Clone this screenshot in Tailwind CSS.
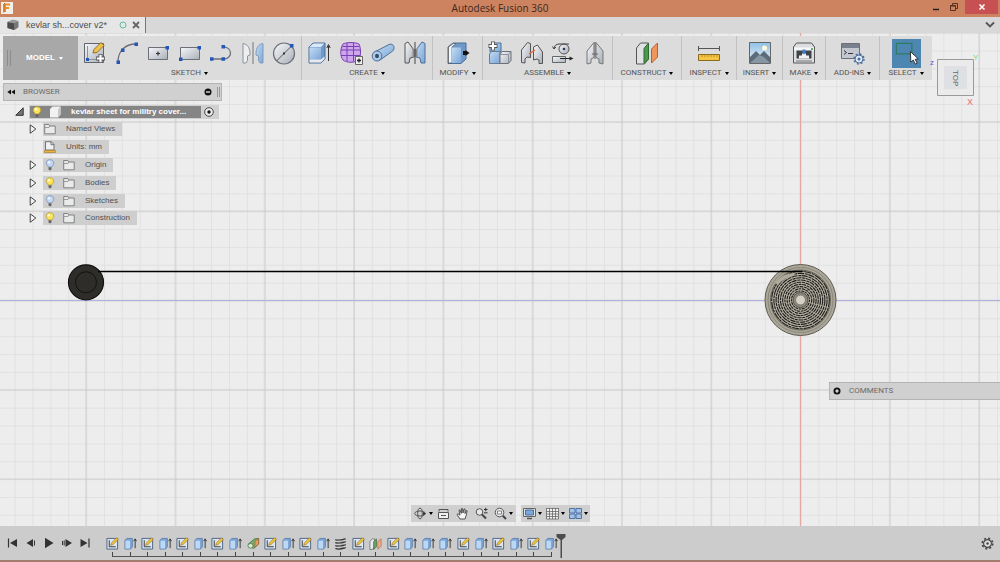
<!DOCTYPE html>
<html lang="en">

<head>
    <meta charset="UTF-8">
    <meta name="viewport" content="width=device-width, initial-scale=1.0">
    <title>Autodesk Fusion 360</title>
    <script src="https://cdn.jsdelivr.net/npm/@tailwindcss/browser@4"></script>
</head>

<body class="bg-[#ededed] font-['Liberation_Sans',Arial,sans-serif] text-[8px] leading-[10px] text-[#555]">
    <!-- icon set -->
    <svg width="0" height="0" class="absolute" aria-hidden="true">
        <defs>
            <linearGradient id="blue" x1="0" y1="0" x2="1" y2="1">
                <stop offset="0" stop-color="#c4dcf4" />
                <stop offset="1" stop-color="#7ba6d6" />
            </linearGradient>
            <linearGradient id="steel" x1="0" y1="0" x2="1" y2="1">
                <stop offset="0" stop-color="#f6f7f9" />
                <stop offset="1" stop-color="#a9afb9" />
            </linearGradient>
            <linearGradient id="sky" x1="0" y1="0" x2="0" y2="1">
                <stop offset="0" stop-color="#8fc0e8" />
                <stop offset="1" stop-color="#f2f6f0" />
            </linearGradient>
        </defs>

        <symbol id="i-sketch" viewBox="0 0 24 24">
            <path d="M1.500 2.500h19v19h-19z" fill="url(#steel)" stroke="#5d6570" />
            <path d="M4.500 5v13.500h13" fill="none" stroke="#8b929c" />
            <path d="M3 17h3v3H3z" fill="#2456b8" />
            <path d="M10 12l1-3.500 7-7 3 3-7 7z" fill="#f2c14a" stroke="#7d5a17" stroke-width=".8" />
            <path d="M17.500 13v9M13 17.500h9" stroke="#555" stroke-width="4" />
            <path d="M17.500 13.800v7.400M13.800 17.500h7.400" stroke="#fff" stroke-width="2.200" />
        </symbol>
        <symbol id="i-arc" viewBox="0 0 24 24">
            <path d="M3 21C3 10 10 3 21 3" fill="none" stroke="#6a6f78" stroke-width="1.300" />
            <path d="M1.500 19.500h3.500v3.500H1.500zM6 7.500h3.500v3.500H6zM19.500 1.500H23V5h-3.500z" fill="#2456b8" />
        </symbol>
        <symbol id="i-rect-center" viewBox="0 0 24 24">
            <path d="M2.500 6.500h19v12h-19z" fill="url(#steel)" stroke="#6a6f78" />
            <path d="M12 10.500v4M10 12.500h4" stroke="#333" stroke-width="1.200" />
            <path d="M19.500 5H23v3.500h-3.500z" fill="#2456b8" />
        </symbol>
        <symbol id="i-rect" viewBox="0 0 24 24">
            <path d="M2.500 6.500h19v12h-19z" fill="url(#steel)" stroke="#6a6f78" />
            <path d="M19.500 5H23v3.500h-3.500zM1 16.500h3.500V20H1z" fill="#2456b8" />
        </symbol>
        <symbol id="i-slot" viewBox="0 0 24 24">
            <path d="M3 18h12c3.500 0 6.500-2.500 6.500-6S18.500 6 14 6" fill="none" stroke="#6a6f78" stroke-width="1.300" />
            <path d="M1 16.300h3.500v3.500H1zM12.500 16.300H16v3.500h-3.500zM12.500 4H16v3.500h-3.500z" fill="#2456b8" />
        </symbol>
        <symbol id="i-mirror" viewBox="0 0 24 24">
            <path d="M2 2.500c4 .500 7 4 7 10v1.500l-2.500 1v4.500L5 22H2z" fill="#eceef0" stroke="#8b929c" />
            <path d="M22 2.500c-4 .500-7 4-7 10v1.500l2.500 1v4.500L19 22h3z" fill="url(#blue)" stroke="#7f9cc0" />
            <path d="M12 1v22" stroke="#777" />
        </symbol>
        <symbol id="i-circle" viewBox="0 0 24 24">
            <circle cx="12" cy="12.500" r="10.500" fill="url(#steel)" stroke="#6a6f78" stroke-width="1.200" />
            <path d="M4.500 20L19.500 5" stroke="#555" />
            <path d="M18 3h3.500v3.500H18z" fill="#2456b8" />
            <path d="M11 11.500h2v2h-2z" fill="#333" />
        </symbol>
        <symbol id="i-extrude" viewBox="0 0 24 24">
            <path d="M2 6l4-4h12v16l-4 4H2z" fill="#6f99c9" stroke="#4d6f99" />
            <path d="M2.500 6.500h11.500v12H2.500z" fill="url(#blue)" />
            <path d="M2.500 6l3.800-3.500h11L14 6z" fill="#d8e8f8" />
            <path d="M2.500 18.500H14l3.500-3v2.500L14 21.500H2.500z" fill="#e8eaee" />
            <path d="M21.500 20V5M19.800 7l1.700-3.500L23.200 7" fill="none" stroke="#333" stroke-width="1" />
        </symbol>
        <symbol id="i-form" viewBox="0 0 24 24">
            <path d="M4 3c4-2 12-2 16 0 2 4 2 12 0 16-4 3-12 3-16 0C1 15 1 8 4 3z" fill="#cda6ee" stroke="#7a3fb0" />
            <path d="M2 9h19.500M2 14.500h19.500M8 2v18.500M14.500 2v18.500M3.500 5.500h17" fill="none" stroke="#7a3fb0" />
            <path d="M16.500 15.500h7v8h-7z" fill="#eee" stroke="#666" />
            <path d="M20 17.500v4M18 19.500h4" stroke="#222" stroke-width="1.300" />
        </symbol>
        <symbol id="i-pipe" viewBox="0 0 24 24">
            <path d="M3.500 11L18 3.500c3-1 5 .5 5 3s-1 3.500-2 4L8.500 19.500z" fill="url(#blue)" stroke="#4d6f99" />
            <ellipse cx="6" cy="15" rx="4.800" ry="5" fill="#a9c8ea" stroke="#4d6f99" />
            <ellipse cx="6" cy="15" rx="2.500" ry="2.800" fill="#33506f" stroke="#e4effa" stroke-width=".7" />
        </symbol>
        <symbol id="i-mirror3d" viewBox="0 0 24 24">
            <path d="M2 2.500L5 1l6 8v7l-4 1-1 5H2z" fill="url(#steel)" stroke="#555" />
            <path d="M22 2.500L19 1l-6 8v7l4 1 1 5h4z" fill="url(#blue)" stroke="#4d6f99" />
            <path d="M9.500 8h5v8h-5z" fill="#888" />
            <path d="M12 1v22" stroke="#444" />
        </symbol>
        <symbol id="i-press" viewBox="0 0 24 24">
            <path d="M2 6l5-4h13v16l-5 4.500H2z" fill="#6f99c9" stroke="#4d6f99" />
            <path d="M2.500 6l4.800-3.500h2.700L6 6v16H2.500z" fill="#f4f5f7" stroke="#555" stroke-width=".7" />
            <path d="M6 6.500h9V22H6z" fill="url(#blue)" />
            <path d="M17 12h3" stroke="#111" stroke-width="4" />
            <path d="M19.500 9l4 3-4 3z" fill="#111" />
        </symbol>
        <symbol id="i-component" viewBox="0 0 24 24">
            <path d="M2 4l2-2h9v9H2z" fill="url(#blue)" stroke="#4d6f99" />
            <path d="M1.500 13l2-2.500H12V22.500H1.500z" fill="url(#blue)" stroke="#6a7c92" />
            <path d="M12 13.500l2-3h9v9l-2.500 3H12z" fill="url(#steel)" stroke="#6a6f78" />
            <path d="M12 13.500h8.500v9M20.500 13.500l2.500-3" fill="none" stroke="#8b929c" />
            <path d="M5 .5v9M.5 5h9" stroke="#555" stroke-width="4" />
            <path d="M5 1.300v7.400M1.300 5h7.400" stroke="#fff" stroke-width="2.200" />
        </symbol>
        <symbol id="i-joint" viewBox="0 0 24 24">
            <path d="M1.500 9l6-7.500 3 1v14l-3.500-.5-2 2v4l-3.500-.5z" fill="url(#steel)" stroke="#555" />
            <path d="M22.500 11l-5-7-4 2v13l3.500-1 2 1v3.500h3.500z" fill="url(#steel)" stroke="#555" />
            <path d="M9 13l6-4" stroke="#e0683c" stroke-width="1.500" />
        </symbol>
        <symbol id="i-asbuilt" viewBox="0 0 24 24">
            <circle cx="13" cy="8" r="5" fill="url(#steel)" stroke="#555" />
            <circle cx="13" cy="8" r="1.300" fill="#2d3e58" />
            <path d="M3 8c0-3 2-5 5-5M3 8L1.500 5.500M3 8l2-2M8 3h10" fill="none" stroke="#444" />
            <path d="M1.500 15.500h13v6h-13z" fill="url(#steel)" stroke="#666" />
            <path d="M9 17.500h11" stroke="#222" />
            <path d="M18.500 15.500l4 2-4 2z" fill="#222" />
        </symbol>
        <symbol id="i-origin" viewBox="0 0 24 24">
            <path d="M4 10l7-8.500v15L8 18v4l-4 1zM20 10l-7-8.500v15l3 1.500v4l4 1z" fill="url(#steel)" stroke="#777" />
            <path d="M12 1v17M9 13h6" stroke="#666" />
        </symbol>
        <symbol id="i-plane" viewBox="0 0 24 24">
            <path d="M1.500 7l4-5h8v16l-4 5h-8z" fill="#dfe1e4" stroke="#555" />
            <path d="M9 7.500l4.500-5.500v16L9 22.500z" fill="#4a9a4c" stroke="#2e6a30" />
            <path d="M16.500 8l6-6v14l-6 6z" fill="#f0955c" stroke="#b8602e" />
        </symbol>
        <symbol id="i-measure" viewBox="0 0 24 24">
            <path d="M1.500 5v5M22.500 5v5M2 7.500h20" stroke="#555" />
            <path d="M1.500 13.500h21v6h-21z" fill="#f5c444" stroke="#8a6a1c" />
            <path d="M5 13.500v2.500M8 13.500v2.500M11 13.500v2.500M14 13.500v2.500M17 13.500v2.500M20 13.500v2.500" stroke="#a8832c" stroke-width=".8" />
        </symbol>
        <symbol id="i-image" viewBox="0 0 24 24">
            <path d="M1.500 1.500h21v21h-21z" fill="url(#sky)" stroke="#666" />
            <circle cx="16.500" cy="7" r="2.500" fill="#fffbd8" />
            <path d="M2 16l6-6 4 4 4-4 6 6v6H2z" fill="#5c6b7a" />
            <path d="M2 22l9-8 5 2 6 6z" fill="#8796a3" />
        </symbol>
        <symbol id="i-print" viewBox="0 0 24 24">
            <path d="M1.500 6l3-4h15l3 4v16h-21z" fill="#dcdde0" stroke="#555" />
            <path d="M2 6.500h20v3H2z" fill="#f7f7f7" />
            <path d="M4.500 9.500h15v8h-15z" fill="#3f434a" />
            <path d="M7 17.500v-3h3v-2h4v2h3v3z" fill="#f2f2f2" />
            <path d="M10.500 8.500h3v3l-1.500 2-1.500-2z" fill="#3f82d0" />
            <path d="M4 20h16" stroke="#777" />
            <path d="M19 8h2" stroke="#3a9a3c" stroke-width="1.500" />
        </symbol>
        <symbol id="i-script" viewBox="0 0 24 24">
            <path d="M.5 2.500h18v15H.5z" fill="#c3c7cf" stroke="#6a6f78" />
            <path d="M1 3h17v4H1z" fill="#78808e" />
            <path d="M3 9.500l2.500 2L3 13.500M7 12.500h5" fill="none" stroke="#333" />
            <circle cx="18" cy="18" r="4" fill="#dfe9f5" stroke="#4b6d9b" />
            <circle cx="18" cy="18" r="5" fill="none" stroke="#4b6d9b" stroke-width="1.400" stroke-dasharray="1.960 1.967" />
            <circle cx="18" cy="18" r="1.500" fill="#4b6d9b" />
        </symbol>
        <symbol id="i-select" viewBox="0 0 30 30">
            <path d="M4.500 4.500h16v11h-16z" fill="none" stroke="#2e7b63" stroke-width="1.300" />
            <path d="M19 13l.5 11 2.500-2.200 2 4.200 2-1-2-4 3.200-.5z" fill="#fff" stroke="#222" stroke-width=".9" />
        </symbol>

        <symbol id="i-bulb-on" viewBox="0 0 10 12">
            <path d="M5 .7c2.500 0 3.800 1.700 3.800 3.500S7.200 6.500 6.700 8H3.300C2.800 6.500 1.200 6 1.200 4.200S2.500.7 5 .7z" fill="#fbe258" stroke="#b39a2e" stroke-width=".7" />
            <path d="M3.500 8.300h3v2.200L5 11.500l-1.500-1z" fill="#666" />
            <circle cx="4" cy="3.300" r="1.300" fill="#fffbd0" />
        </symbol>
        <symbol id="i-bulb-off" viewBox="0 0 10 12">
            <path d="M5 .7c2.500 0 3.800 1.700 3.800 3.500S7.200 6.500 6.700 8H3.300C2.800 6.500 1.200 6 1.200 4.200S2.500.7 5 .7z" fill="#c3d7f2" stroke="#6f8cb8" stroke-width=".7" />
            <path d="M3.500 8.300h3v2.200L5 11.500l-1.500-1z" fill="#666" />
            <circle cx="4" cy="3.300" r="1.300" fill="#eef5ff" />
        </symbol>
        <symbol id="i-folder" viewBox="0 0 12 12">
            <path d="M.7 10.800V1.500h4l1 1.500h5.500v7.800z" fill="#e9eaea" stroke="#777" stroke-width=".9" />
            <path d="M1 4.500h4L6 3" fill="none" stroke="#888" stroke-width=".8" />
        </symbol>
        <symbol id="i-units" viewBox="0 0 12 12">
            <path d="M1.500 9V.7h5.800L10 3.500V9z" fill="#eef0f2" stroke="#666" stroke-width=".9" />
            <path d="M7 .7v3h3" fill="none" stroke="#666" stroke-width=".9" />
            <path d="M.5 9.500h11v2H.5z" fill="#efb23c" stroke="#a87519" stroke-width=".6" />
        </symbol>
        <symbol id="i-arrow" viewBox="0 0 8 10">
            <path d="M1.200.8L6.800 5 1.200 9.300z" fill="#f2f2f2" stroke="#444" />
        </symbol>
        <symbol id="i-cube" viewBox="0 0 12 12">
            <path d="M1 3l2.500-2.500h8v8L9 11.500H1z" fill="#f2f2f2" />
            <path d="M9 3.500l2.500-3v8L9 11.500z" fill="#c8c8c8" />
        </symbol>

        <!-- timeline -->
        <symbol id="t-sketch" viewBox="0 0 14 14">
            <path d="M1 1.500h11.500V13H1z" fill="#dbe6f3" stroke="#4a5f80" />
            <path d="M3.500 3.500v7h7" fill="none" stroke="#333" />
            <path d="M5 9l.8-2.500L11.300.8l1.900 1.900L7.500 8.200z" fill="#f3c63a" stroke="#8a6413" stroke-width=".6" />
        </symbol>
        <symbol id="t-extrude" viewBox="0 0 14 14">
            <path d="M1 3.500l2-2h6v9l-2 2.500H1z" fill="#7da6d8" stroke="#4e74a5" stroke-width=".8" />
            <path d="M1.500 4h5v8.500h-5z" fill="#bcd8f5" />
            <path d="M12 12V2.500M10.500 4.500L12 2l1.500 2.500" fill="none" stroke="#333" />
        </symbol>
        <symbol id="t-loft" viewBox="0 0 14 14">
            <path d="M1 8l7-6 4.500-.5v6L7 12.500z" fill="#74b06c" stroke="#3f6e3a" stroke-width=".8" />
            <path d="M8.500 4.500l4-3v6l-4 3.500z" fill="#e89a64" stroke="#9c5a2c" stroke-width=".7" />
            <ellipse cx="3.800" cy="9.500" rx="2.800" ry="2.500" fill="#d9ecd2" stroke="#3f6e3a" stroke-width=".8" />
        </symbol>
        <symbol id="t-coil" viewBox="0 0 14 14">
            <path d="M2 3c3 1 7 0 10-1M2 6.200c3 1 7 0 10-1M2 9.400c3 1 7 0 10-1M2 12.600c3 1 7 0 10-1" fill="none" stroke="#333" stroke-width="1.500" stroke-linecap="round" />
            <path d="M2 3l10 2.200M2 6.200l10 2.200M2 9.400l10 2.200" fill="none" stroke="#888" stroke-width=".7" />
        </symbol>
        <symbol id="t-plane" viewBox="0 0 14 14">
            <path d="M1 5l2.500-3H6v8.500l-2.500 3H1z" fill="#e9ebee" stroke="#666" stroke-width=".8" />
            <path d="M5 5l3-3v8.500l-3 3z" fill="#6aa568" stroke="#3f6e3a" stroke-width=".8" />
            <path d="M9.500 5l3.500-3v8l-3.500 3z" fill="#f0a888" stroke="#b8704e" stroke-width=".8" />
        </symbol>
    </svg>

    <div class="flex min-h-screen flex-col">
        <!-- title bar -->
        <header class="relative flex h-[17px] items-start justify-between bg-[#cd8360]">
            <svg class="ml-px mt-[2px] size-3" viewBox="0 0 12 12">
                <path d="M0 0h12v12H0z" fill="#f3efe8" />
                <path d="M4 10V2.500h5M4 6h4" fill="none" stroke="#e8902c" stroke-width="2" />
                <path d="M2.800 10.500V2l1.200-.8" fill="none" stroke="#8c4a12" stroke-width=".8" />
            </svg>
            <h1 class="absolute inset-x-0 text-center font-['Open_Sans',sans-serif] text-[10px] leading-[17px] text-[#3a2a22]">Autodesk Fusion 360</h1>
            <div class="relative mr-[2px] flex">
                <button aria-label="Minimize" class="flex h-[14px] w-[18px] items-center justify-center">
                    <svg class="size-[10px]" viewBox="0 0 10 10"><path d="M2 7.500h6" stroke="#222" stroke-width="1.500" /></svg>
                </button>
                <button aria-label="Restore" class="mr-[2px] flex h-[14px] w-[18px] items-center justify-center">
                    <svg class="size-[10px]" viewBox="0 0 10 10"><path d="M1.500 3.500h5v5h-5zM3.500 3V1.500h5v5H7M1.500 4h5" fill="none" stroke="#4a2a1c" stroke-width=".9" /></svg>
                </button>
                <button aria-label="Close" class="flex h-[14px] w-[33px] items-center justify-center bg-[#c75052]">
                    <svg class="size-[8px]" viewBox="0 0 8 8"><path d="M1.500 1.500l5 5M6.500 1.500l-5 5" stroke="#fff" stroke-width="1.600" /></svg>
                </button>
            </div>
        </header>

        <!-- document tabs -->
        <nav class="flex h-4 items-center justify-between bg-[#d8d8d8]">
            <div class="flex h-full items-center border-r border-[#777] bg-[#e6e6e6] pl-[7px] pr-[5px]">
                <svg class="size-3" viewBox="0 0 12 12">
                    <path d="M.5 3L6 .7l5.500 1.500v6L7.500 11 .5 9z" fill="#777" />
                    <path d="M.5 3L7 4.200V11L.5 9z" fill="#4c4c4c" />
                    <path d="M.5 3L6 .7l5.500 1.500L7 4.200z" fill="#999" />
                </svg>
                <a href="#" class="ml-[7px] text-[9px] leading-4 text-[#4c4c4c]">kevlar sh...cover v2*</a>
                <svg class="ml-3 size-[8px]" viewBox="0 0 8 8"><circle cx="4" cy="4" r="3" fill="none" stroke="#62bda5" /></svg>
                <button aria-label="Close tab" class="ml-[5px]">
                    <svg class="size-[8px]" viewBox="0 0 8 8"><path d="M1 1l6 6M7 1L1 7" stroke="#666" stroke-width="1.900" /></svg>
                </button>
            </div>
            <button aria-label="Show tabs" class="mr-[5px]">
                <svg class="h-[8px] w-[10px]" viewBox="0 0 10 8"><path d="M1 1.500l4 4 4-4" fill="none" stroke="#555" stroke-width="1.800" /></svg>
            </button>
        </nav>

        <main class="relative flex-1 overflow-hidden pl-[3px] pt-[3px]">
            <!-- model canvas -->
            <svg class="absolute inset-0 h-full w-full" viewBox="0 33 1000 493" preserveAspectRatio="xMidYMid slice">
                <defs>
                    <pattern id="minor" x="800.500" y="300.500" width="17.860" height="17.860" patternUnits="userSpaceOnUse">
                        <path d="M0 0h17.860M0 0v17.860" stroke="#d6d6d6" stroke-width="1" />
                    </pattern>
                    <pattern id="major" x="755.850" y="255.850" width="89.300" height="89.300" patternUnits="userSpaceOnUse">
                        <path d="M0 44.650h89.300M44.650 0v89.300" stroke="#c6c6c6" stroke-width=".8" />
                    </pattern>
                </defs>
                <path d="M0 33h1000v493H0z" fill="#ededed" />
                <path d="M0 33h1000v493H0z" fill="url(#minor)" />
                <path d="M0 33h1000v493H0z" fill="url(#major)" />
                <path d="M0 300.500h1000" stroke="#b2b2e0" />
                <path d="M800.500 33v493" stroke="#e3a8a4" />

                <circle cx="86" cy="282.300" r="17.500" fill="#2e2d29" stroke="#111" stroke-width="1.200" />
                <circle cx="86" cy="282.300" r="10.500" fill="none" stroke="#12120f" />

                <g fill="none">
                    <circle cx="800.500" cy="300" r="35.500" fill="#aaa698" stroke="#5c5a52" />
                    <circle cx="800.500" cy="300" r="32.500" stroke="#8a877b" />
                    <circle cx="800.500" cy="300" r="30" fill="#b2aea0" stroke="#67645a" />
                    <g id="windings" stroke="#1f1e1b"></g>
                    <path d="M775 283c3-4 8-8 13-9l8-1-3 3c-6 1-11 4-15 9z" fill="#aeaa9c" />
                    <circle cx="800.500" cy="300" r="7.500" fill="#8d897c" stroke="#55534b" />
                    <circle cx="800.500" cy="300" r="5" fill="#d4d1c6" stroke="#7c796f" />
                </g>
                <path d="M98 271.500h704" stroke="#000" stroke-width="1.400" />
            </svg>

            <!-- toolbar -->
            <div class="relative flex h-[44px] w-fit bg-[#dcdcdc] text-[#555]">
                <button class="relative flex w-[75px] items-center justify-center gap-1 bg-[#a8a8a8] pl-2 font-bold text-white">
                    <span class="absolute left-1 h-4 w-1 border-x border-[#8c8c8c]"></span>
                    MODEL <span class="border-x-[2px] border-t-[3px] border-x-transparent border-t-white"></span>
                </button>
                <section class="flex w-[224px] flex-col justify-between border-r border-[#c2c2c2] px-[5px] pb-[2px] pt-[5px]">
                    <div class="flex justify-between">
                        <button aria-label="Create sketch"><svg class="size-[24px]"><use href="#i-sketch" /></svg></button>
                        <button aria-label="Arc"><svg class="size-[24px]"><use href="#i-arc" /></svg></button>
                        <button aria-label="Center rectangle"><svg class="size-[24px]"><use href="#i-rect-center" /></svg></button>
                        <button aria-label="Rectangle"><svg class="size-[24px]"><use href="#i-rect" /></svg></button>
                        <button aria-label="Slot"><svg class="size-[24px]"><use href="#i-slot" /></svg></button>
                        <button aria-label="Mirror sketch"><svg class="size-[24px]"><use href="#i-mirror" /></svg></button>
                        <button aria-label="Circle"><svg class="size-[24px]"><use href="#i-circle" /></svg></button>
                    </div>
                    <button class="flex items-center justify-center gap-[3px] font-[Roboto,sans-serif]">SKETCH <span class="border-x-[2px] border-t-[3px] border-x-transparent border-t-black"></span></button>
                </section>
                <section class="flex w-[131px] flex-col justify-between border-r border-[#c2c2c2] px-[5px] pb-[2px] pt-[5px]">
                    <div class="flex justify-between">
                        <button aria-label="Extrude"><svg class="size-[24px]"><use href="#i-extrude" /></svg></button>
                        <button aria-label="Form"><svg class="size-[24px]"><use href="#i-form" /></svg></button>
                        <button aria-label="Pipe"><svg class="size-[24px]"><use href="#i-pipe" /></svg></button>
                        <button aria-label="Mirror"><svg class="size-[24px]"><use href="#i-mirror3d" /></svg></button>
                    </div>
                    <button class="flex items-center justify-center gap-[3px] font-[Roboto,sans-serif]">CREATE <span class="border-x-[2px] border-t-[3px] border-x-transparent border-t-black"></span></button>
                </section>
                <section class="flex w-[50px] flex-col justify-between border-r border-[#c2c2c2] pb-[2px] pt-[5px]">
                    <button aria-label="Press pull" class="mx-auto"><svg class="size-[24px]"><use href="#i-press" /></svg></button>
                    <button class="flex items-center justify-center gap-[3px] font-[Roboto,sans-serif]">MODIFY <span class="border-x-[2px] border-t-[3px] border-x-transparent border-t-black"></span></button>
                </section>
                <section class="flex w-[130px] flex-col justify-between border-r border-[#c2c2c2] px-[5px] pb-[2px] pt-[5px]">
                    <div class="flex justify-between">
                        <button aria-label="New component"><svg class="size-[24px]"><use href="#i-component" /></svg></button>
                        <button aria-label="Joint"><svg class="size-[24px]"><use href="#i-joint" /></svg></button>
                        <button aria-label="As-built joint"><svg class="size-[24px]"><use href="#i-asbuilt" /></svg></button>
                        <button aria-label="Joint origin"><svg class="size-[24px]"><use href="#i-origin" /></svg></button>
                    </div>
                    <button class="flex items-center justify-center gap-[3px] font-[Roboto,sans-serif]">ASSEMBLE <span class="border-x-[2px] border-t-[3px] border-x-transparent border-t-black"></span></button>
                </section>
                <section class="flex w-[69px] flex-col justify-between border-r border-[#c2c2c2] pb-[2px] pt-[5px]">
                    <button aria-label="Offset plane" class="mx-auto"><svg class="size-[24px]"><use href="#i-plane" /></svg></button>
                    <button class="flex items-center justify-center gap-[3px] font-[Roboto,sans-serif]">CONSTRUCT <span class="border-x-[2px] border-t-[3px] border-x-transparent border-t-black"></span></button>
                </section>
                <section class="flex w-[55px] flex-col justify-between border-r border-[#c2c2c2] pb-[2px] pt-[5px]">
                    <button aria-label="Measure" class="mx-auto"><svg class="size-[24px]"><use href="#i-measure" /></svg></button>
                    <button class="flex items-center justify-center gap-[3px] font-[Roboto,sans-serif]">INSPECT <span class="border-x-[2px] border-t-[3px] border-x-transparent border-t-black"></span></button>
                </section>
                <section class="flex w-[46px] flex-col justify-between border-r border-[#c2c2c2] pb-[2px] pt-[5px]">
                    <button aria-label="Insert image" class="mx-auto"><svg class="size-[24px]"><use href="#i-image" /></svg></button>
                    <button class="flex items-center justify-center gap-[3px] font-[Roboto,sans-serif]">INSERT <span class="border-x-[2px] border-t-[3px] border-x-transparent border-t-black"></span></button>
                </section>
                <section class="flex w-[43px] flex-col justify-between border-r border-[#c2c2c2] pb-[2px] pt-[5px]">
                    <button aria-label="3D print" class="mx-auto"><svg class="size-[24px]"><use href="#i-print" /></svg></button>
                    <button class="flex items-center justify-center gap-[3px] font-[Roboto,sans-serif]">MAKE <span class="border-x-[2px] border-t-[3px] border-x-transparent border-t-black"></span></button>
                </section>
                <section class="flex w-[54px] flex-col justify-between border-r border-[#c2c2c2] pb-[2px] pt-[5px]">
                    <button aria-label="Scripts and add-ins" class="mx-auto"><svg class="size-[24px]"><use href="#i-script" /></svg></button>
                    <button class="flex items-center justify-center gap-[3px] font-[Roboto,sans-serif]">ADD-INS <span class="border-x-[2px] border-t-[3px] border-x-transparent border-t-black"></span></button>
                </section>
                <section class="flex w-[52px] flex-col justify-between pb-[2px] pt-[3px]">
                    <button aria-label="Select" class="mx-auto bg-[#4d86b0]"><svg class="size-[29px]"><use href="#i-select" /></svg></button>
                    <button class="flex items-center justify-center gap-[3px] font-[Roboto,sans-serif]">SELECT <span class="border-x-[2px] border-t-[3px] border-x-transparent border-t-black"></span></button>
                </section>
            </div>

            <!-- view cube -->
            <div class="absolute right-[18px] top-[18px]">
                <svg class="h-[58px] w-[52px] font-['Liberation_Sans',Arial,sans-serif]" viewBox="930 51 52 58">
                    <text x="930" y="65" font-size="8" fill="#5a5ae0">z</text>
                    <text x="973" y="60" font-size="8" fill="#6de06d">Y</text>
                    <text x="967" y="105" font-size="9" fill="#f06a6a">X</text>
                    <path d="M937.500 59.500h36v36h-36z" fill="#ebebeb" stroke="#9a9a9a" />
                    <path d="M944 66h23v23h-23z" fill="#dfe0e3" />
                    <text transform="translate(952.500 70) rotate(90)" font-size="8" fill="#666">TOP</text>
                </svg>
            </div>

            <!-- browser -->
            <aside class="relative mt-[3px] w-[219px]">
                <div class="flex h-[18px] items-center border border-[#b4b4b4] bg-[#d0d0d0] pl-[3px] pr-px text-[#6b6b6b]">
                    <svg class="h-[6px] w-[8px]" viewBox="0 0 8 6"><path d="M4 .5v5L.3 3zM8 .5v5L4.300 3z" fill="#111" /></svg>
                    <h2 class="ml-2 flex-1 font-[Roboto,sans-serif]">BROWSER</h2>
                    <button aria-label="Collapse browser"><svg class="size-[8px]" viewBox="0 0 8 8"><circle cx="4" cy="4" r="3.500" fill="#111" /><path d="M2 4h4" stroke="#fff" stroke-width="1.200" /></svg></button>
                    <span class="ml-[5px] h-[10px] w-[3px] border-x border-[#999]"></span>
                </div>
                <ul class="mt-[2px] flex h-[124px] flex-col justify-between text-[#505050]">
                    <li class="flex h-[17px] items-center pl-[12px]">
                        <svg class="mr-[5px] size-[9px]" viewBox="0 0 9 9"><path d="M.8 8.300h7.400V.8z" fill="#777" stroke="#333" /></svg>
                        <span class="flex h-[14px] items-center bg-[#d0d0d0] pl-px pr-[5px]">
                            <a href="#" class="flex h-[12px] w-[171px] items-center bg-[#858585] font-bold text-white">
                                <svg class="ml-[2px] h-[12px] w-[10px]"><use href="#i-bulb-on" /></svg>
                                <svg class="ml-[7px] size-[12px]"><use href="#i-cube" /></svg>
                                <span class="ml-[10px]">kevlar sheet for militry cover...</span>
                            </a>
                            <svg class="ml-[3px] size-[10px]" viewBox="0 0 10 10"><circle cx="5" cy="5" r="4.300" fill="#eee" stroke="#333" stroke-width=".9" /><circle cx="5" cy="5" r="1.700" fill="#111" /></svg>
                        </span>
                    </li>
                    <li class="flex h-[17px] items-center pl-[26px]">
                        <svg class="mr-[6px] h-[10px] w-[8px]"><use href="#i-arrow" /></svg>
                        <a href="#" class="flex h-[14px] items-center bg-[#cecece] pl-px pr-[7px]">
                            <svg class="size-[12px]"><use href="#i-folder" /></svg>
                            <span class="ml-[10px]">Named Views</span>
                        </a>
                    </li>
                    <li class="flex h-[17px] items-center pl-[40px]">
                        <a href="#" class="flex h-[14px] items-center bg-[#cecece] pl-px pr-[7px]">
                            <svg class="size-[12px]"><use href="#i-units" /></svg>
                            <span class="ml-[10px]">Units: mm</span>
                        </a>
                    </li>
                    <li class="flex h-[17px] items-center pl-[26px]">
                        <svg class="mr-[6px] h-[10px] w-[8px]"><use href="#i-arrow" /></svg>
                        <a href="#" class="flex h-[14px] items-center bg-[#cecece] pl-[2px] pr-[7px]">
                            <svg class="h-[12px] w-[10px]"><use href="#i-bulb-off" /></svg>
                            <svg class="ml-[8px] size-[12px]"><use href="#i-folder" /></svg>
                            <span class="ml-[10px]">Origin</span>
                        </a>
                    </li>
                    <li class="flex h-[17px] items-center pl-[26px]">
                        <svg class="mr-[6px] h-[10px] w-[8px]"><use href="#i-arrow" /></svg>
                        <a href="#" class="flex h-[14px] items-center bg-[#cecece] pl-[2px] pr-[7px]">
                            <svg class="h-[12px] w-[10px]"><use href="#i-bulb-on" /></svg>
                            <svg class="ml-[8px] size-[12px]"><use href="#i-folder" /></svg>
                            <span class="ml-[10px]">Bodies</span>
                        </a>
                    </li>
                    <li class="flex h-[17px] items-center pl-[26px]">
                        <svg class="mr-[6px] h-[10px] w-[8px]"><use href="#i-arrow" /></svg>
                        <a href="#" class="flex h-[14px] items-center bg-[#cecece] pl-[2px] pr-[7px]">
                            <svg class="h-[12px] w-[10px]"><use href="#i-bulb-off" /></svg>
                            <svg class="ml-[8px] size-[12px]"><use href="#i-folder" /></svg>
                            <span class="ml-[10px]">Sketches</span>
                        </a>
                    </li>
                    <li class="flex h-[17px] items-center pl-[26px]">
                        <svg class="mr-[6px] h-[10px] w-[8px]"><use href="#i-arrow" /></svg>
                        <a href="#" class="flex h-[14px] items-center bg-[#cecece] pl-[2px] pr-[7px]">
                            <svg class="h-[12px] w-[10px]"><use href="#i-bulb-on" /></svg>
                            <svg class="ml-[8px] size-[12px]"><use href="#i-folder" /></svg>
                            <span class="ml-[10px]">Construction</span>
                        </a>
                    </li>
                </ul>
            </aside>

            <!-- comments -->
            <div class="absolute bottom-[126px] right-0 flex h-[18px] w-[171px] items-center border border-r-0 border-[#b4b4b4] bg-[#d0d0d0] pl-[3px] text-[#6b6b6b]">
                <button aria-label="Expand comments"><svg class="size-[8px]" viewBox="0 0 8 8"><circle cx="4" cy="4" r="3.500" fill="#111" /><path d="M4 2.200v3.600M2.200 4h3.600" stroke="#fff" stroke-width="1.200" /></svg></button>
                <h2 class="ml-2 font-[Roboto,sans-serif]">COMMENTS</h2>
            </div>

            <!-- navigation bar -->
            <div class="absolute inset-x-0 bottom-1 flex justify-center gap-[5px]">
                <div class="flex h-[17px] items-center bg-[#cfcfcf] px-[3px]">
                    <button aria-label="Orbit" class="flex items-center gap-[2px]">
                        <svg class="size-[13px]" viewBox="0 0 13 13"><ellipse cx="6" cy="6.500" rx="5.300" ry="2.500" fill="none" stroke="#555" /><ellipse cx="6" cy="6.500" rx="2.300" ry="5.300" fill="none" stroke="#555" /><path d="M9 5l3 1.500L9 8.500z" fill="#333" /></svg>
                        <span class="border-x-[2px] border-t-[3px] border-x-transparent border-t-black"></span>
                    </button>
                    <button aria-label="Look at" class="ml-1"><svg class="size-[13px]" viewBox="0 0 13 13"><path d="M1.500 5.500h10v6h-10z" fill="#eee" stroke="#555" /><path d="M4 8.500h5M2 2.500h9M2 2.500v2M11 2.500v2" stroke="#555" /></svg></button>
                    <button aria-label="Pan" class="ml-[6px]"><svg class="size-[13px]" viewBox="0 0 13 13"><path d="M4 12L1 7.500l1-.8 2 1.500-1-5 1-.3 1.300 3.500L5.500 1.500h1L7 6l1-4h1v4.500l1.300-3 .9.400L10 9l-1 3z" fill="#f7f7f7" stroke="#444" stroke-width=".9" /></svg></button>
                    <button aria-label="Zoom" class="ml-[6px]"><svg class="size-[13px]" viewBox="0 0 13 13"><circle cx="4.500" cy="5" r="3.300" fill="#e4e9ee" stroke="#555" /><path d="M7 7.500l4 4" stroke="#444" stroke-width="2" /><path d="M9 2.500h3.500M10.700.8v3.400M9 5.800h3.500" stroke="#333" /></svg></button>
                    <button aria-label="Fit" class="ml-[6px] flex items-center gap-[2px]">
                        <svg class="size-[13px]" viewBox="0 0 13 13"><circle cx="5.500" cy="5.500" r="4.300" fill="#e4e9ee" stroke="#555" /><path d="M3.500 4h4v3h-4z" fill="#fff" stroke="#666" stroke-width=".8" /><path d="M8.800 8.800l3.200 3.200" stroke="#444" stroke-width="2" /></svg>
                        <span class="border-x-[2px] border-t-[3px] border-x-transparent border-t-black"></span>
                    </button>
                </div>
                <div class="flex h-[17px] items-center gap-[4px] bg-[#cfcfcf] px-[2px]">
                    <button aria-label="Display settings" class="flex items-center gap-[2px]">
                        <svg class="size-[13px]" viewBox="0 0 13 13"><path d="M.5 1.500h12v8H.5z" fill="#e6e6e6" stroke="#666" /><path d="M2.500 3h8v5h-8z" fill="#7da7d9" stroke="#46709f" /><path d="M4 11.500h5" stroke="#555" stroke-width="1.500" /></svg>
                        <span class="border-x-[2px] border-t-[3px] border-x-transparent border-t-black"></span>
                    </button>
                    <button aria-label="Grid and snaps" class="flex items-center gap-[2px]">
                        <svg class="size-[13px]" viewBox="0 0 13 13"><path d="M.5 1h12v11H.5z" fill="#f3f3f3" /><path d="M.5 1v11M3.500 1v11M6.500 1v11M9.500 1v11M12.500 1v11M.5 1.500h12M.5 4.500h12M.5 7h12M.5 9.500h12M.5 12h12" stroke="#666" stroke-width=".8" /></svg>
                        <span class="border-x-[2px] border-t-[3px] border-x-transparent border-t-black"></span>
                    </button>
                    <button aria-label="Viewports" class="flex items-center gap-[2px]">
                        <svg class="size-[13px]" viewBox="0 0 13 13"><path d="M.5 1.500h5.500v4.500H.5zM7 1.500h5.500v4.500H7zM.5 7h5.500v4.500H.5zM7 7h5.500v4.500H7z" fill="#a3c2e6" stroke="#4f74a3" /></svg>
                        <span class="border-x-[2px] border-t-[3px] border-x-transparent border-t-black"></span>
                    </button>
                </div>
            </div>
        </main>

        <!-- timeline -->
        <footer class="flex h-[36px] items-start border-b-2 border-[#a27c6c] bg-[#cccccc] pt-[8px]">
            <div class="flex w-[104px] gap-[6px] pl-[7px] pt-[3px]">
                <button aria-label="Go to start"><svg class="size-[12px]" viewBox="0 0 12 12"><path d="M1.500 1.500v9" stroke="#333" stroke-width="1.200" /><path d="M10 2v8L3 6z" fill="#333" /></svg></button>
                <button aria-label="Step back"><svg class="size-[12px]" viewBox="0 0 12 12"><path d="M8 2v8L1.500 6z" fill="#333" /><path d="M9.500 3.500v5" stroke="#333" /></svg></button>
                <button aria-label="Play"><svg class="size-[12px]" viewBox="0 0 12 12"><path d="M2 .8v10.400L10.500 6z" fill="#333" /></svg></button>
                <button aria-label="Step forward"><svg class="size-[12px]" viewBox="0 0 12 12"><path d="M4.500 2v8L11 6z" fill="#333" /><path d="M1.500 4v4M3.200 3.500v5" stroke="#333" /></svg></button>
                <button aria-label="Go to end"><svg class="size-[12px]" viewBox="0 0 12 12"><path d="M10 1.500v9" stroke="#333" stroke-width="1.200" /><path d="M1.500 2v8l7-4z" fill="#333" /></svg></button>
            </div>
            <div class="w-[456px] pt-[3px]">
                <div id="timeline" class="grid grid-cols-26"></div>
                <div class="mx-[8px] h-px bg-[#555]"></div>
            </div>
            <svg class="-ml-1 h-[24px] w-[10px]" viewBox="0 0 10 24"><path d="M.5 0h9v3L6 6v18H4.500V6L.5 3z" fill="#4d4d4d" /></svg>
            <button aria-label="Timeline settings" class="ml-auto mr-[6px] pt-[3px]">
                <svg class="size-[13px]" viewBox="0 0 14 14"><circle cx="7" cy="7" r="5.600" fill="none" stroke="#444" stroke-width="1.800" stroke-dasharray="2.200 2.198" /><circle cx="7" cy="7" r="4.200" fill="#ddd" stroke="#444" stroke-width="1.200" /><circle cx="7" cy="7" r="1.300" fill="#444" /></svg>
            </button>
        </footer>
    </div>

    <script>
        const features = [
            'sketch', 'extrude', 'sketch', 'extrude', 'sketch', 'extrude', 'sketch', 'extrude', 'loft',
            'sketch', 'extrude', 'sketch', 'extrude', 'coil', 'sketch', 'plane', 'sketch', 'extrude',
            'extrude', 'extrude', 'sketch', 'extrude', 'sketch', 'extrude', 'sketch', 'extrude'
        ];
        document.getElementById('timeline').innerHTML = features.map((name) => `
            <button aria-label="${name}" class="flex flex-col items-center">
                <svg class="size-[13px]"><use href="#t-${name}" /></svg>
                <span class="mt-[2px] h-1 w-px bg-[#444]"></span>
            </button>`).join('');

        // rolled sheet, one ring per turn
        let rings = '';
        for (let r = 9; r < 29; r += 2.2) {
            rings += `<circle cx="800.5" cy="300" r="${r}" stroke-width="1.1" stroke-dasharray="${r / 4} .8 3 .6" />`;
        }
        document.getElementById('windings').innerHTML = rings;
    </script>
</body>

</html>
